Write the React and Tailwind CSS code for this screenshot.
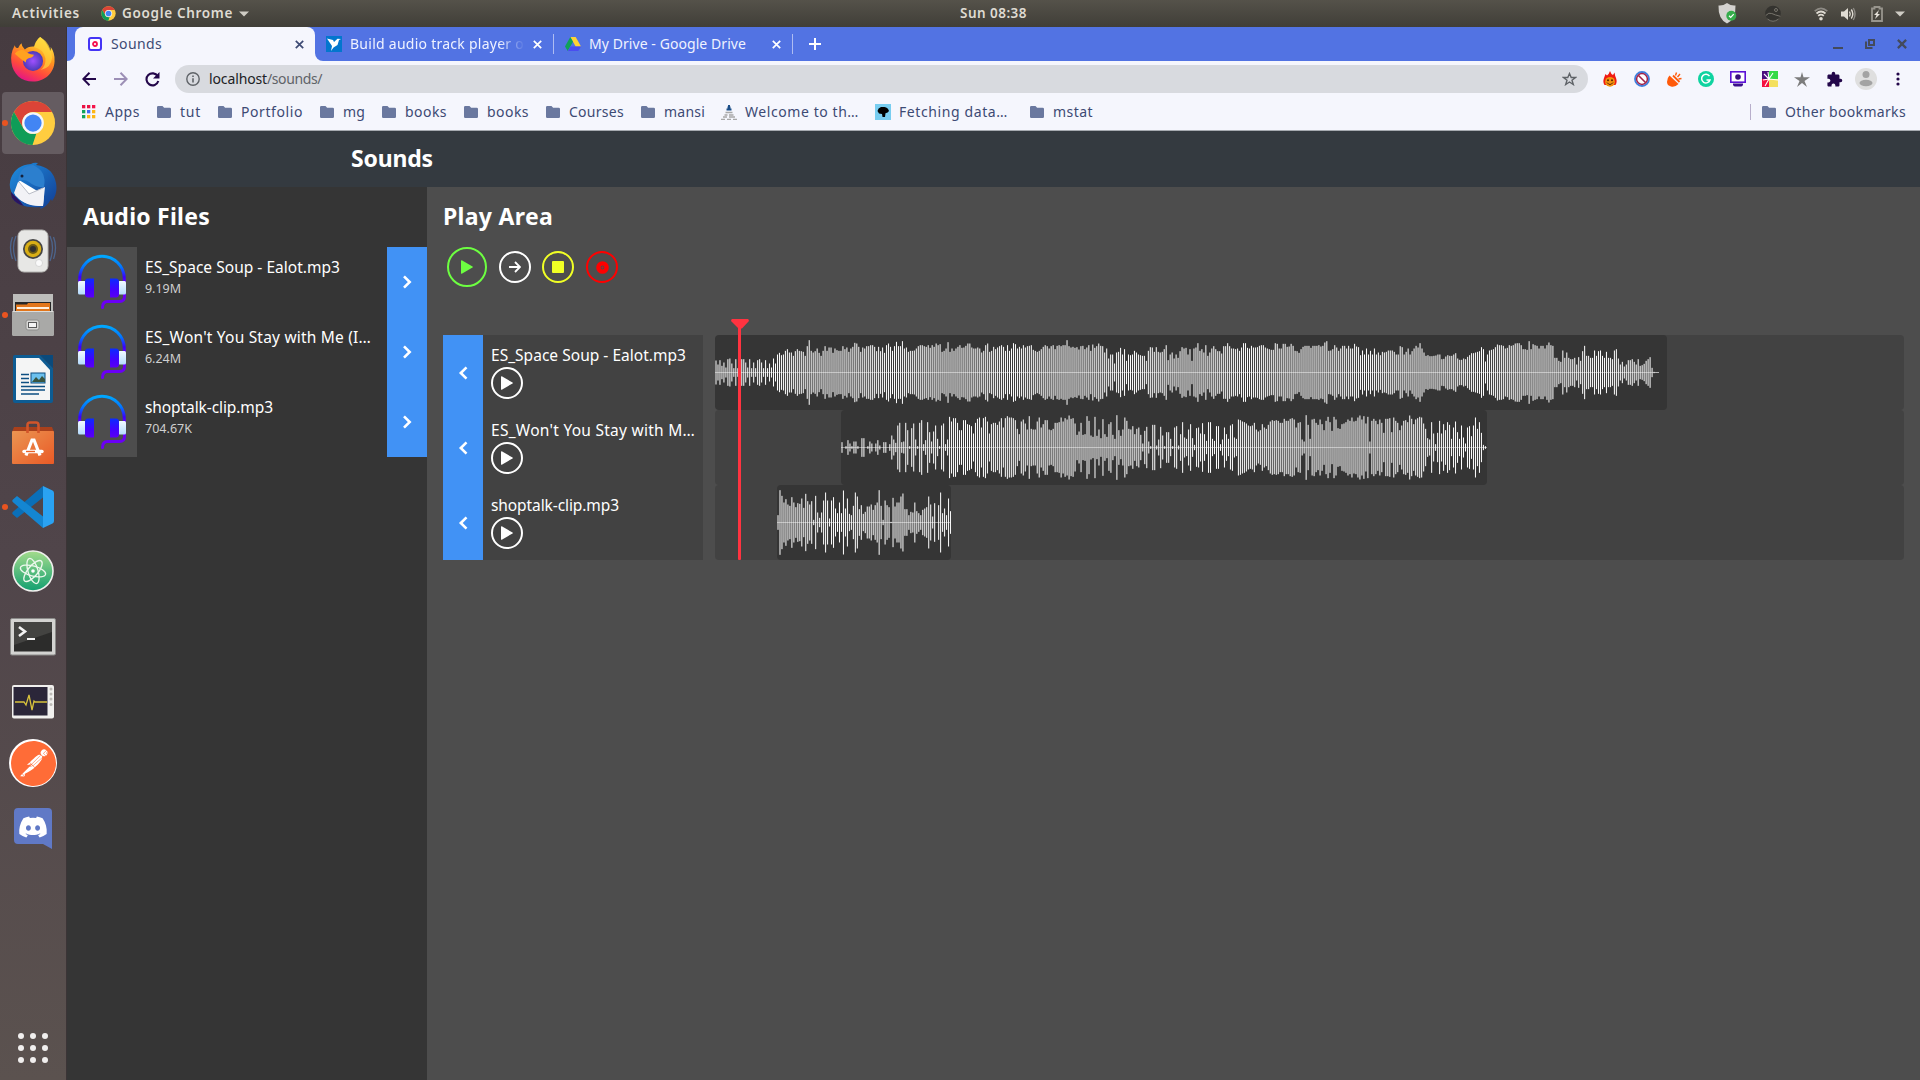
import React, { useLayoutEffect, useRef } from "react";
import { FaDiscord } from "react-icons/fa";
import { SiPostman } from "react-icons/si";
import { MdExtension } from "react-icons/md";

/* Text spread evenly over a given width. */
function Fit({ w, children, className = "" }) {
  const ref = useRef(null);
  useLayoutEffect(() => {
    const el = ref.current;
    el.style.letterSpacing = "0px";
    const natural = el.getBoundingClientRect().width;
    el.style.letterSpacing = `${(w - natural) / children.length}px`;
  }, [w, children]);
  return (
    <span ref={ref} className={`inline-block whitespace-pre ${className}`}>
      {children}
    </span>
  );
}

const WAVE_1 = [
  36,24,37,20,30,15,40,42,27,13,40,13,13,40,40,30,15,40,13,30,
  13,37,40,30,13,37,13,27,15,42,27,54,59,52,54,65,70,60,60,50,
  64,70,65,64,62,50,79,97,65,60,64,72,59,50,65,79,65,75,75,59,
  72,67,65,65,79,70,75,62,72,77,89,87,77,62,75,72,79,79,82,82,
  77,64,77,64,75,59,82,87,77,65,79,92,79,79,94,72,75,62,65,65,
  66,72,79,82,82,79,77,82,74,82,77,87,82,85,62,65,72,91,62,72,
  65,72,77,82,74,75,80,87,87,75,72,72,75,72,60,65,82,87,62,65,
  77,70,75,79,82,77,65,82,65,72,88,85,72,77,72,82,75,79,80,82,
  68,65,62,65,70,77,82,79,72,79,82,70,80,82,79,82,82,97,79,75,
  77,74,76,69,79,80,70,75,82,65,84,74,79,87,80,79,60,72,42,54,
  54,27,60,62,74,54,70,35,54,52,54,65,60,54,52,50,50,35,65,76,
  75,62,76,62,60,62,70,82,37,54,60,42,54,44,64,76,72,74,54,70,
  35,72,75,88,65,70,60,82,50,60,72,79,70,64,64,57,79,79,88,79,
  72,72,70,72,65,75,88,88,74,72,80,75,75,76,80,82,82,75,72,70,
  68,68,88,86,72,72,86,86,77,78,86,80,65,64,59,70,77,80,80,80,
  74,80,80,80,82,78,80,90,94,65,66,70,82,75,65,72,80,80,72,80,
  72,72,86,78,76,52,66,54,72,54,65,54,72,54,60,52,62,60,62,66,
  66,66,62,54,54,79,76,54,62,72,54,64,72,80,75,88,72,60,50,52,
  49,49,50,51,54,54,40,41,48,52,50,50,54,58,42,38,38,42,40,47,
  52,58,58,60,62,64,76,70,33,54,66,68,70,76,84,82,82,80,72,74,
  82,80,82,87,88,88,82,70,70,68,94,70,85,82,80,72,80,80,72,82,
  90,82,80,44,44,35,32,66,44,60,44,40,40,44,24,46,35,64,80,50,
  50,44,44,66,50,64,66,50,44,62,44,44,40,66,70,42,24,32,18,24,
  37,37,40,32,24,40,20,22,26,35,40,46,14,2,1,1,
];

const WAVE_2 = [
  16,0,4,22,12,4,18,18,4,0,28,28,0,4,18,12,0,12,22,6,
  0,16,16,0,10,36,24,14,66,74,16,18,74,52,4,58,72,24,4,74,
  82,10,22,76,46,18,48,66,26,4,66,72,10,24,92,78,88,88,74,52,
  52,82,82,70,68,64,42,74,86,90,60,88,92,78,42,70,74,74,68,78,
  88,60,88,94,90,90,88,82,56,40,78,84,72,54,94,56,54,54,78,90,
  60,70,82,82,54,52,56,74,74,76,90,78,88,84,96,86,88,72,
  38,48,74,38,40,94,80,36,32,92,35,54,28,85,40,32,70,76,38,26,
  97,52,35,54,90,80,56,54,64,40,56,60,38,12,50,62,18,4,68,68,
  6,24,62,36,4,46,46,26,4,60,64,6,40,76,30,26,54,70,28,8,58,60,
  42,73,40,20,76,76,26,20,64,64,10,24,60,40,26,66,70,30,26,84,
  82,78,76,72,66,64,66,74,54,48,52,70,60,56,68,78,82,80,82,80,
  74,74,86,80,80,86,88,84,60,74,76,24,18,97,68,26,84,86,74,68,
  84,70,52,80,92,76,50,92,84,58,56,70,72,76,84,80,90,78,80,90,
  96,84,94,72,92,18,80,86,80,70,84,74,44,86,86,88,46,90,80,74,
  52,66,80,82,76,96,86,70,84,88,92,90,72,56,28,24,76,42,10,44,
  80,42,70,52,76,68,26,60,78,46,26,66,30,12,60,64,34,66,90,56,76,44,8,4,1,
];

const WAVE_3 = [
  22,97,80,60,70,54,50,76,60,46,58,56,72,44,86,64,54,64,8,80,
  30,14,30,66,90,66,12,66,76,42,28,60,28,96,42,72,26,22,50,90,
  78,40,52,26,32,48,48,54,38,52,60,97,50,8,66,52,46,2,74,48,
  60,60,78,87,40,40,22,32,30,60,34,28,22,38,42,46,78,54,18,58,
  0,52,90,28,42,22,72,34,
];

function Wave({ data, width, phase, pitch }) {
  return (
    <svg width={width} height="75" className="block">
      <g fill="#ffffff">
        {data.map((a, i) => {
          const h = (a * 2) / 3;
          return h > 0 ? (
            <rect key={i} x={phase + i * pitch} y={37.5 - h / 2} width="1" height={h} />
          ) : null;
        })}
      </g>
      <rect x="0" y="37" width={data.length * pitch} height="1" fill="#fff" opacity="0.45" />
    </svg>
  );
}

function Headphones() {
  return (
    <svg width="54" height="60" viewBox="0 0 54 60">
      <defs>
        <linearGradient id="hp-band" x1="0" y1="0" x2="0" y2="1">
          <stop offset="0" stopColor="#00a8ff" />
          <stop offset="0.4" stopColor="#0074ff" />
          <stop offset="0.75" stopColor="#3a00ff" />
          <stop offset="1" stopColor="#7a00f5" />
        </linearGradient>
        <linearGradient id="hp-pad" x1="0" y1="0" x2="0" y2="1">
          <stop offset="0" stopColor="#0a2cff" />
          <stop offset="0.6" stopColor="#4400ff" />
          <stop offset="1" stopColor="#5a00f5" />
        </linearGradient>
        <linearGradient id="hp-cap" x1="0" y1="0" x2="0" y2="1">
          <stop offset="0" stopColor="#f2f9ff" />
          <stop offset="1" stopColor="#b5dcff" />
        </linearGradient>
      </defs>
      <path d="M4.700 31V25.500a22.300 22.300 0 0 1 44.600 0V31" fill="none" stroke="url(#hp-band)" strokeWidth="3" />
      <path d="M49.500 41v2.500q0 5-5 5H32.500q-5 0-5 6" fill="none" stroke="#6a00f6" strokeWidth="3" strokeLinecap="round" />
      <rect x="3" y="28" width="8" height="13.500" rx="1.500" fill="url(#hp-cap)" />
      <rect x="43" y="28" width="8" height="13.500" rx="1.500" fill="url(#hp-cap)" />
      <path d="M13 25.500h6v19h-6q-3-.4-3-3V28.500q0-2.700 3-3z" fill="url(#hp-pad)" />
      <path d="M41 25.500h-6v19h6q3-.4 3-3V28.500q0-2.700-3-3z" fill="url(#hp-pad)" />
    </svg>
  );
}

function Chevron({ left }) {
  return (
    <svg width="10" height="14" viewBox="0 0 10 14" fill="none" stroke="#fff" strokeWidth="2.600">
      <path d={left ? "M8.500 1.300 2.800 7 8.500 12.700" : "M2 1.300 7.700 7 2 12.700"} />
    </svg>
  );
}

const Folder = () => (
  <svg width="14" height="12" viewBox="0 0 14 12" fill="#6a789f" className="shrink-0">
    <path d="M1.300 0h4.200l1.600 1.800h5.600Q14 1.800 14 3v7.700q0 1.300-1.300 1.300H1.300Q0 12 0 10.700V1.300Q0 0 1.300 0z" />
  </svg>
);

const AppsGrid = () => (
  <svg width="14" height="14" viewBox="0 0 14 14" className="shrink-0">
    {["#ea1244", "#ea1244", "#f5134a", "#12a45b", "#4168f5", "#fdb614", "#12a45b", "#fdb614", "#fdb614"].map((c, i) => (
      <rect key={i} x={(i % 3) * 5} y={Math.floor(i / 3) * 5} width="3.300" height="3.300" fill={c} />
    ))}
  </svg>
);

const Lighthouse = () => (
  <svg width="16" height="16" viewBox="0 0 16 16" className="-mr-px shrink-0">
    <path d="M8 1v2M5.500 5.500h5M6.500 3.500h3" stroke="#1c4f88" strokeWidth="2" />
    <path d="M4.500 8.500h7M3.500 11h3M8 11h4.500M2 13h4M8 13h6M0 15.300h4M6 15.300h4M12 15.300h4" stroke="#a8a8a8" strokeWidth="1.300" />
  </svg>
);

const Silhouette = () => (
  <svg width="16" height="16" viewBox="0 0 16 16" className="-mr-px shrink-0">
    <rect width="16" height="16" fill="#78cdf0" />
    <path d="M2.500 7q.5-3 3.500-4h3.500q3.500.5 4.500 4-1 2-3.500 2.300L10 13H7.500L7 10l-3-.5z" fill="#000" />
  </svg>
);

const BOOKMARKS = [
  { t: "Apps", w: 35, mr: 17, icon: <AppsGrid /> },
  { t: "tut", w: 21, mr: 17 },
  { t: "Portfolio", w: 62, mr: 17 },
  { t: "mg", w: 22, mr: 17 },
  { t: "books", w: 42, mr: 17 },
  { t: "books", w: 42, mr: 17 },
  { t: "Courses", w: 55, mr: 17 },
  { t: "mansi", w: 41, mr: 16 },
  { t: "Welcome to th…", w: 114, mr: 16, icon: <Lighthouse /> },
  { t: "Fetching data…", w: 109, mr: 22, icon: <Silhouette /> },
  { t: "mstat", w: 40, mr: 0 },
];

function ChromeLogo({ size }) {
  return (
    <svg width={size} height={size} viewBox="0 0 48 48">
      <circle cx="24" cy="24" r="23" fill="#ffcd40" />
      <path d="M4.100 12.500A23 23 0 0 1 44 12.600H24a11.500 11.500 0 0 0-10.300 16.500z" fill="#db4437" />
      <path d="M4.100 12.500 14 29.700a11.500 11.500 0 0 0 13.500 5.200L23.500 47A23 23 0 0 1 4.100 12.500z" fill="#0f9d58" />
      <circle cx="24" cy="24" r="11.300" fill="#f4f6fb" />
      <circle cx="24" cy="24" r="9" fill="#4285f4" />
    </svg>
  );
}

const Firefox = () => (
  <svg width="46" height="47" viewBox="0 0 48 48">
    <defs>
      <linearGradient id="fx" x1="0.75" y1="0.05" x2="0.3" y2="1">
        <stop offset="0" stopColor="#fff04f" />
        <stop offset="0.35" stopColor="#ff9a1e" />
        <stop offset="0.7" stopColor="#ff4a3c" />
        <stop offset="1" stopColor="#e3128a" />
      </linearGradient>
      <radialGradient id="fxg">
        <stop offset="0" stopColor="#a050ff" />
        <stop offset="1" stopColor="#4a3ab8" />
      </radialGradient>
    </defs>
    <path d="M5 9q-5 9-3.500 18C3 39 12 47 24 47s22-9 22.500-21Q47 17 42.500 11q.5 3-.5 4.500Q38 5 31.500 0.500 27 4 25.500 10.500 19 10 15.500 13.500 12 10.500 12 7 9.500 9 8.500 12 5.500 12 5 9z" fill="url(#fx)" />
    <circle cx="24" cy="25.500" r="10.500" fill="url(#fxg)" />
    <path d="M5 18q4-5 10-3.500 3 3.500 10 4.500-1 3-5 3.500-3.500 1-3.500 4.500-5-3-11.500-9z" fill="#ffa21f" />
    <path d="M25 11q10 2 12 12 .5 8-5 12 11-2 12-13Q43 7 31.500.5 26 5 25 11z" fill="#ffd43a" opacity="0.7" />
  </svg>
);

const Thunderbird = () => (
  <svg width="50" height="50" viewBox="0 0 50 50">
    <defs>
      <linearGradient id="tb" x1="0" y1="0" x2="1" y2="1">
        <stop offset="0" stopColor="#1f8fe0" />
        <stop offset="1" stopColor="#123c93" />
      </linearGradient>
    </defs>
    <path d="M3 16Q8 3 23 2q3-2 7-1l-2 2Q45 5 48 21q2 10-4 18l-1-2q-4 8-11 10l1-2Q12 47 4 36l4 1Q-1 27 3 16z" fill="url(#tb)" />
    <path d="M11 18 36 33l-1 11Q18 45 7 33z" fill="#fff" />
    <path d="m10 20 11 12 16-7-2 19Q15 45 6 31z" fill="#f2f2f6" />
    <path d="m11 20 10 12 14-6" fill="none" stroke="#b9bcc6" />
    <path d="M10 20Q11 4 25 3q14 6 11 22-8 1-15-5-6-4-11 0z" fill="#2c7fce" />
    <circle cx="14" cy="14" r="1.500" fill="#14213d" />
    <path d="M4 36q-1-3-1-6l9 9q2 3 4 5-8-2-12-8z" fill="#2a1560" />
  </svg>
);

const Speaker = () => (
  <svg width="50" height="48" viewBox="0 0 50 48">
    <g fill="none" stroke="#4e6e9e" strokeWidth="1.300" opacity="0.8">
      <path d="M8 9Q3 20 8 34M4.500 10q-4 10 0 22M42 9q5 11 0 25M45.500 10q4 10 0 22" />
    </g>
    <rect x="10" y="3" width="30" height="42" rx="6" fill="#e7e7e5" stroke="#b5b5b2" />
    <circle cx="25" cy="22" r="10" fill="#454545" />
    <circle cx="25" cy="22" r="8.300" fill="#d8ae16" />
    <circle cx="25" cy="22" r="5" fill="#6b5a16" />
    <circle cx="25" cy="22" r="3" fill="#2f2f2f" />
    <circle cx="31" cy="36" r="3.500" fill="#fafafa" stroke="#c4c4c4" strokeWidth="0.600" />
  </svg>
);

const FilesCabinet = () => (
  <svg width="44" height="44" viewBox="0 0 44 44">
    <path d="M2 1h40v19H2z" fill="#bdbdbb" />
    <rect x="4" y="9" width="36" height="11" fill="#262626" />
    <path d="M5 11.500h11l1-1.500h22v8H5z" fill="#e2761b" />
    <path d="M6 14h32v2H6z" fill="#fff0df" />
    <rect x="1" y="18" width="42" height="25" rx="1.500" fill="#a9a9a7" />
    <path d="M1.500 18.500h41" stroke="#dcdcda" />
    <rect x="15" y="27" width="13" height="10" rx="2" fill="#d8d8d6" stroke="#8e8e8c" />
    <rect x="17.500" y="29.500" width="8" height="5" fill="#f5f5f5" stroke="#595959" />
  </svg>
);

const Writer = () => (
  <svg width="40" height="48" viewBox="0 0 40 48">
    <path d="M2 0h25l13 13v33q0 2-2 2H2q-2 0-2-2V2Q0 0 2 0z" fill="#0d5c93" />
    <path d="M27 0h13v13z" fill="#0a4a7c" />
    <path d="M3 3h23l11 12v30H3z" fill="#f4f5f5" />
    <path d="M8 19.500h8M8 23.500h8M8 27.500h8M8 31.500h24M8 35h24M8 39h18" stroke="#0d4f82" strokeWidth="1.700" />
    <rect x="18" y="18" width="14" height="10" fill="#6cc1ee" stroke="#0d4f82" />
    <path d="m19 27 4-5 3 3 3-4 3 3v3z" fill="#39543f" />
  </svg>
);

const SoftwareBag = () => (
  <svg width="42" height="44" viewBox="0 0 42 44">
    <defs>
      <linearGradient id="bag" x1="0" y1="0" x2="1" y2="1">
        <stop offset="0" stopColor="#ea9552" />
        <stop offset="1" stopColor="#ea5a26" />
      </linearGradient>
    </defs>
    <path d="M2 6h38l2 5H0z" fill="#a8401c" />
    <rect y="10" width="42" height="33" rx="1" fill="url(#bag)" />
    <path d="M15.500 12V4q0-2.500 2.500-2.500h6q2.500 0 2.500 2.500v8" fill="none" stroke="#d3552a" strokeWidth="2.600" />
    <path d="M14 34.500 20 19h2l6 15.500" fill="none" stroke="#fff" strokeWidth="3.200" />
    <path d="M12 30.500h18" stroke="#fff" strokeWidth="3.400" strokeLinecap="round" />
    <path d="M14 30.500h9" stroke="#e8622a" strokeWidth="1.400" />
  </svg>
);

const VsCode = () => (
  <svg width="42" height="42" viewBox="0 0 42 42">
    <path d="M31 0v11.500L5 32l-4-3.500q-1.500-1.300 0-2.700z" fill="#0a6fb8" />
    <path d="M31 42V30.500L5 10l-4 3.500q-1.500 1.300 0 2.700z" fill="#1486d2" />
    <path d="M31 0l9.500 4.500Q42 5.200 42 7v28q0 1.800-1.500 2.500L31 42z" fill="#2aa2f2" />
  </svg>
);

const Atom = () => (
  <svg width="42" height="42" viewBox="0 0 42 42">
    <defs>
      <linearGradient id="atom" x1="0" y1="0" x2="0" y2="1">
        <stop offset="0" stopColor="#a4dc8c" />
        <stop offset="1" stopColor="#12a070" />
      </linearGradient>
    </defs>
    <circle cx="21" cy="21" r="20" fill="url(#atom)" stroke="#f0f0ee" strokeWidth="1.600" />
    <g fill="none" stroke="#eef8ee" strokeWidth="1.300">
      <ellipse cx="21" cy="21" rx="13" ry="5" transform="rotate(15 21 21)" />
      <ellipse cx="21" cy="21" rx="13" ry="5" transform="rotate(73 21 21)" />
      <ellipse cx="21" cy="21" rx="13" ry="5" transform="rotate(130 21 21)" />
    </g>
    <circle cx="21" cy="21" r="1.800" fill="#fff" />
  </svg>
);

const Terminal = () => (
  <svg width="46" height="40" viewBox="0 0 46 40" className="mt-[3px]">
    <rect x="0.500" y="1.500" width="45" height="36.500" rx="1.500" fill="#d3d3d1" stroke="#8b8b89" />
    <rect x="4" y="5" width="38" height="29.500" fill="#2c2c2b" />
    <path d="M4 5h38v10L4 28z" fill="#434341" />
    <path d="m9 10 6 4.500-6 4.500" fill="none" stroke="#f3f3f3" strokeWidth="2.600" />
    <path d="M17 22h8" stroke="#f3f3f3" strokeWidth="2" />
  </svg>
);

const Monitor = () => (
  <svg width="42" height="34" viewBox="0 0 42 34" className="mt-[5px]">
    <rect width="42" height="33.500" rx="2" fill="#f1f0ee" />
    <rect x="1.500" y="2" width="34" height="28.500" fill="#2b2639" />
    <path d="M3 17h9l2 3 3-10 3 15 2-9 1 1h12" fill="none" stroke="#d8c23c" strokeWidth="1.300" />
    {[4, 9, 14, 19.500].map((y) => (
      <circle key={y} cx="39" cy={y} r="1.500" fill="#bcbab6" />
    ))}
  </svg>
);

const Postman = () => (
  <div className="flex size-12 items-center justify-center rounded-full bg-white">
    <SiPostman size={45} color="#ff6c37" />
  </div>
);

const Discord = () => (
  <div className="relative mt-[3px] flex h-[42px] w-[38px] justify-center">
    <svg width="38" height="42" viewBox="0 0 38 42" className="absolute inset-0">
      <path d="M4 0h30q4 0 4 4v37l-9-5H4q-4 0-4-4V4q0-4 4-4z" fill="#6079c6" />
    </svg>
    <FaDiscord size={30} color="#fff" className="relative mt-1" />
  </div>
);

const DOCK = [
  { icon: <Firefox /> },
  { icon: <ChromeLogo size={46} />, active: true, dot: true },
  { icon: <Thunderbird /> },
  { icon: <Speaker /> },
  { icon: <FilesCabinet />, dot: true },
  { icon: <Writer /> },
  { icon: <SoftwareBag /> },
  { icon: <VsCode />, dot: true },
  { icon: <Atom /> },
  { icon: <Terminal /> },
  { icon: <Monitor /> },
  { icon: <Postman /> },
  { icon: <Discord /> },
];

function Dock() {
  return (
    <nav className="flex w-[67px] shrink-0 flex-col border-r border-[#3b3436] bg-linear-to-b from-[#463b40] via-[#50454a] to-[#5b524f]">
      {DOCK.map((d, i) => (
        <div key={i} className="flex h-16 items-center pl-[2px]">
          <div
            className={`relative flex h-[62px] w-[62px] items-center justify-center rounded ${d.active ? "bg-[#655c61]" : ""}`}
          >
            {d.icon}
            {d.dot && <span className="absolute top-[28px] left-0 size-[6px] rounded-full bg-[#e95420]" />}
          </div>
        </div>
      ))}
      <div className="mt-auto mb-[17px] grid w-[30px] grid-cols-3 gap-[6px] self-center">
        {Array.from({ length: 9 }, (_, i) => (
          <span key={i} className="size-[6px] rounded-full bg-[#f1efee]" />
        ))}
      </div>
    </nav>
  );
}

function TopBar() {
  return (
    <header className="flex h-[27px] shrink-0 items-center bg-linear-to-b from-[#55524a] to-[#403e38] text-[13.500px] font-semibold text-[#dfdbd2]">
      <div className="flex w-[960px] items-center pl-3">
        <Fit w={68}>Activities</Fit>
        <div className="ml-[21px] flex items-center">
          <ChromeLogo size={15} />
          <Fit w={111} className="ml-[6px]">Google Chrome</Fit>
          <Caret className="ml-[6px]" />
        </div>
      </div>
      <Fit w={67}>Sun 08:38</Fit>
      <div className="flex flex-1 items-center justify-end pr-[15px]">
        <svg width="19" height="21" viewBox="0 0 19 21" className="mr-[28px]">
          <path d="M9 0q4 3 8.500 2.500Q18 16 9 20.500 0 16 .5 2.500 5 3 9 0z" fill="#d4d2cf" />
          <circle cx="13.300" cy="12.700" r="5" fill="#35ac4b" />
          <path d="m11 12.800 1.700 1.600 3-3.200" fill="none" stroke="#fff" strokeWidth="1.200" />
        </svg>
        <svg width="16" height="17" viewBox="0 0 16 17" className="mr-[33px]">
          <circle cx="8" cy="8.500" r="7.800" fill="#34332f" />
          <path d="M.8 10.500q3-3.500 6-2t8.500 2.800M2.500 14q5.500 4.500 11 0" fill="none" stroke="#77746c" />
          <circle cx="11" cy="5" r="1.500" fill="none" stroke="#77746c" />
        </svg>
        <svg width="14" height="14" viewBox="0 0 14 14" fill="none" strokeWidth="1.700" className="mr-[13px]">
          <path d="M.7 4.200q6.300-5.500 12.600 0" stroke="#8d8a84" />
          <path d="M2.500 6.500q4.500-4 9 0M4.200 8.800q2.800-2.400 5.600 0" stroke="#dfdbd2" />
          <circle cx="7" cy="11.800" r="1.800" fill="#dfdbd2" />
        </svg>
        <svg width="15" height="14" viewBox="0 0 15 14" className="mr-[15px]">
          <path d="M0 4.500h3L7 1v12L3 9.500H0z" fill="#dfdbd2" />
          <path d="M8.500 4.500q1.500 2.500 0 5M10.300 2.500q3 4.500 0 9" fill="none" stroke="#dfdbd2" strokeWidth="1.400" />
          <path d="M12.300 1q3.500 6 0 12" fill="none" stroke="#8d8a84" strokeWidth="1.400" />
        </svg>
        <svg width="12" height="16" viewBox="0 0 12 16" className="mr-[12px]">
          <path d="M1 2.500h2.500V1h5v1.500H11V15H1z" fill="none" stroke="#98958d" strokeWidth="1.800" />
          <path d="M8 4 3 9h2.500L4 13l5-5H6.500z" fill="#e6e2da" />
        </svg>
        <Caret />
      </div>
    </header>
  );
}

const Caret = ({ className = "" }) => (
  <svg width="10" height="6" viewBox="0 0 10 6" className={className}>
    <path d="M0 0.500h10L5 5.500z" fill="#cfccc4" />
  </svg>
);

const Close = ({ color = "#fff", size = 9, sw = 1.7 }) => (
  <svg width={size} height={size} viewBox="0 0 9 9" stroke={color} strokeWidth={sw} className="shrink-0">
    <path d="M.8.8l7.400 7.400M8.200.8.8 8.200" />
  </svg>
);

function TabStrip() {
  return (
    <div className="flex h-[34px] items-center bg-[#5273e3] text-[14px] text-[#eff2ff]">
      <div className="flex h-full w-2 shrink-0 items-end bg-[#f5f6fd]">
        <span className="h-full w-full rounded-br-lg bg-[#5273e3]" />
      </div>
      <div className="flex h-full w-[240px] shrink-0 items-center rounded-t-lg bg-[#f5f6fd] pl-[13px] text-[#3d4a74]">
        <svg width="14" height="14" viewBox="0 0 14 14">
          <rect x="1" y="1" width="12" height="12" rx="2" fill="#fff" stroke="#4434f5" strokeWidth="2" />
          <circle cx="7" cy="7" r="2" fill="none" stroke="#f5124f" strokeWidth="1.800" />
        </svg>
        <Fit w={51} className="ml-[9px] pb-[2px]">Sounds</Fit>
        <span className="mr-[11px] ml-auto flex">
          <Close color="#3d4a74" />
        </span>
      </div>
      <div className="flex h-full flex-1 items-center">
        <div className="flex h-full w-2 shrink-0 bg-[#f5f6fd]">
          <span className="h-full w-full rounded-bl-lg bg-[#5273e3]" />
        </div>
        <svg width="16" height="16" viewBox="0 0 16 16" className="ml-[3px]">
          <rect width="16" height="16" fill="#0376ce" />
          <path d="M1 2.500 7 4l1 2 3.500-3.300L15 3l-2 1-1.500 5-4 2.500L5 15l1-5z" fill="#fff" />
        </svg>
        <div className="ml-[8px] flex w-[175px] overflow-hidden mask-r-from-85% mask-r-to-100%">
          <Fit w={174} className="pb-[2px]">Build audio track player o</Fit>
        </div>
        <span className="ml-[8px] flex">
          <Close />
        </span>
        <span className="ml-[11px] h-5 w-px bg-[#aebcf2]" />
        <svg width="16" height="15" viewBox="0 0 16 15" className="ml-[11px]">
          <path d="M5.300 0h5.400L16 9.500h-5.300z" fill="#ffd335" />
          <path d="M5.300 0 8 4.800 2.700 14 0 9.500z" fill="#10a15a" />
          <path d="M5.300 9.500H16L13.300 14H2.700z" fill="#4a4df0" />
        </svg>
        <Fit w={157} className="ml-[8px] pb-[2px]">My Drive - Google Drive</Fit>
        <span className="ml-[26px] flex">
          <Close />
        </span>
        <span className="ml-[11px] h-5 w-px bg-[#aebcf2]" />
        <svg width="12" height="12" viewBox="0 0 12 12" stroke="#fff" strokeWidth="2" className="ml-[16px]">
          <path d="M6 0v12M0 6h12" />
        </svg>
        <div className="mr-[13px] ml-auto flex items-center gap-[22px]">
          <svg width="10" height="10" viewBox="0 0 10 10">
            <rect y="8" width="10" height="2" fill="#434a5c" />
          </svg>
          <svg width="10" height="10" viewBox="0 0 10 10" fill="none" stroke="#434a5c" strokeWidth="2">
            <path d="M4 1h5v5H4z" />
            <path d="M1 2.500V9h6.500" />
          </svg>
          <Close color="#434a5c" size={10} sw={2} />
        </div>
      </div>
    </div>
  );
}

function Extensions() {
  const cell = "flex w-8 shrink-0 justify-center";
  return (
    <div className="flex items-center">
      <div className={cell}>
        <svg width="14" height="16" viewBox="0 0 14 16">
          <path d="M7 0q1 3 3 4l1.500-2.500Q12 5 13 7q1.500 4-.5 7h-11Q-.5 11 1 7l1.500-4L4 4.500Q6 3 7 0z" fill="#f01a12" />
          <circle cx="7" cy="10.800" r="4.900" fill="#f3930f" />
          <path d="M4 11.500q3 4 6 0" fill="none" stroke="#5c2204" />
          <circle cx="5" cy="9.200" r="1" fill="#5c2204" />
          <circle cx="9" cy="9.200" r="1" fill="#5c2204" />
        </svg>
      </div>
      <div className={cell}>
        <svg width="16" height="16" viewBox="0 0 16 16" fill="none">
          <circle cx="8" cy="8" r="7" fill="#fff" stroke="#3f7fdd" strokeWidth="1.800" />
          <circle cx="8" cy="8" r="5.400" stroke="#a1234a" strokeWidth="1.500" />
          <path d="m4.500 4.500 7 7" stroke="#a1234a" strokeWidth="1.600" />
        </svg>
      </div>
      <div className={cell}>
        <svg width="15" height="15" viewBox="0 0 15 15">
          <path d="M2.500 3.500 11.500 12Q8 15.500 4 14.500T0 10q0-4 2.500-6.500z" fill="#ff5a0a" />
          <path d="m6 3.500 6.500 6.500" stroke="#ff5a0a" strokeWidth="1.800" />
          <path d="M8.500 3.500 9.500.5M10.500 5 13 2M11.500 7l3-.5" stroke="#ff5a0a" strokeWidth="1.400" />
        </svg>
      </div>
      <div className={cell}>
        <svg width="16" height="16" viewBox="0 0 16 16">
          <circle cx="8" cy="8" r="8" fill="#0fd3a0" />
          <path d="M11.500 5.200A4.300 4.300 0 1 0 12 9H8.500" fill="none" stroke="#fff" strokeWidth="1.500" />
        </svg>
      </div>
      <div className={cell}>
        <svg width="16" height="16" viewBox="0 0 16 16">
          <rect x="0.800" y="0.800" width="14.400" height="10.400" fill="#fff" stroke="#5c12d6" strokeWidth="1.600" />
          <circle cx="8" cy="6" r="2.800" fill="#3a1080" />
          <path d="M3 12.500h10v1.500q-1 1.500-2 1.500H5q-1 0-2-1.500z" fill="#3a0e8c" />
        </svg>
      </div>
      <div className={cell}>
        <svg width="16" height="16" viewBox="0 0 16 16">
          <rect width="7" height="8" fill="#4b0d7e" />
          <rect x="7" width="9" height="8" fill="#35da45" />
          <rect y="8" width="7" height="8" fill="#f5113f" />
          <rect x="7" y="8" width="9" height="8" fill="#f4e05e" />
          <path d="M7 8 2 3M7 8 6 1M7 8l4-6M7 8 1 9M7 8l-4 7M7 8l9 1" stroke="#fff" strokeWidth="1.100" />
        </svg>
      </div>
      <div className={cell}>
        <svg width="16" height="15" viewBox="0 0 16 15">
          <path d="m8 0 1.500 5.300H16L10.500 9l2.500 6-5-4-5 4 2.500-6L0 5.300h6.500z" fill="#7c7c7c" />
        </svg>
      </div>
      <div className={cell}>
        <MdExtension size={17} color="#23074a" />
      </div>
      <div className={cell}>
        <svg width="22" height="22" viewBox="0 0 22 22">
          <circle cx="11" cy="11" r="11" fill="#dfdfdf" />
          <circle cx="11" cy="6.500" r="3.500" fill="#a3a3a3" />
          <ellipse cx="11" cy="15" rx="6.500" ry="3.300" fill="#a3a3a3" />
        </svg>
      </div>
      <div className={cell}>
        <svg width="4" height="14" viewBox="0 0 4 14" fill="#23074a">
          <circle cx="2" cy="2" r="1.600" />
          <circle cx="2" cy="7" r="1.600" />
          <circle cx="2" cy="12" r="1.600" />
        </svg>
      </div>
    </div>
  );
}

function Toolbar() {
  return (
    <div className="flex h-[36px] items-center bg-[#f5f6fd] pr-[6px]">
      <svg width="14" height="14" viewBox="0 0 14 14" fill="none" stroke="#23074a" strokeWidth="2" className="ml-[15px]">
        <path d="M14 7H1.500M7.500.8 1.300 7l6.200 6.200" />
      </svg>
      <svg width="14" height="14" viewBox="0 0 14 14" fill="none" stroke="#9c8fb6" strokeWidth="2" className="ml-[18px]">
        <path d="M0 7h12.500M6.500.8 12.700 7l-6.200 6.200" />
      </svg>
      <svg width="15" height="15" viewBox="0 0 15 15" fill="none" className="ml-[17px]">
        <path d="M12.700 4.300A6 6 0 1 0 13.300 9" stroke="#23074a" strokeWidth="2.100" />
        <path d="M14.500 0v6.500H8z" fill="#23074a" />
      </svg>
      <div className="ml-[15px] flex h-7 flex-1 items-center rounded-full bg-[#d8dadf] pr-[11px] pl-[11px] text-[14px]">
        <svg width="14" height="14" viewBox="0 0 14 14" fill="none" stroke="#5f6368" strokeWidth="1.400">
          <circle cx="7" cy="7" r="6.200" />
          <path d="M7 6.200v4.300M7 3.500V5" strokeWidth="1.600" />
        </svg>
        <Fit w={58} className="ml-[9px] pb-[2px] text-[#202124]">localhost</Fit>
        <Fit w={55} className="pb-[2px] text-[#5f6368]">/sounds/</Fit>
        <svg width="15" height="14" viewBox="0 0 15 14" fill="none" stroke="#5f6368" strokeWidth="1.400" className="ml-auto">
          <path d="m7.500 1.500 1.700 4h4.300L10 8.300l1.300 4.200-3.800-2.500-3.800 2.500L5 8.300 1.500 5.500h4.300z" />
        </svg>
      </div>
      <div className="ml-[6px]">
        <Extensions />
      </div>
    </div>
  );
}

function Bookmarks() {
  return (
    <div className="flex h-[34px] items-center border-b border-[#a6aab0] bg-[#f5f6fd] pb-[3px] pl-[15px] text-[14px] text-[#3d4a74]">
      {BOOKMARKS.map((b, i) => (
        <div key={i} className="flex items-center gap-[9px]" style={{ marginRight: b.mr }}>
          {b.icon || <Folder />}
          <Fit w={b.w} className="pb-[2px]">{b.t}</Fit>
        </div>
      ))}
      <div className="mr-[14px] ml-auto flex items-center">
        <span className="mr-[11px] h-4 w-px bg-[#b8aecb]" />
        <Folder />
        <Fit w={121} className="ml-[9px] pb-[2px]">Other bookmarks</Fit>
      </div>
    </div>
  );
}

const FILES = [
  { name: "ES_Space Soup - Ealot.mp3", w: 195, size: "9.19M", sw: 36 },
  { name: "ES_Won't You Stay with Me (I…", w: 226, size: "6.24M", sw: 36 },
  { name: "shoptalk-clip.mp3", w: 128, size: "704.67K", sw: 47 },
];

function Sidebar() {
  return (
    <aside className="flex w-[360px] shrink-0 flex-col bg-[#353535] text-white">
      <h2 className="flex h-[60px] items-center pb-[2px] pl-4 text-[23px] font-bold">
        <Fit w={127}>Audio Files</Fit>
      </h2>
      {FILES.map((f) => (
        <div key={f.name} className="flex h-[70px]">
          <div className="flex w-[70px] items-start justify-center bg-[#4d4d4d] pt-[6px]">
            <Headphones />
          </div>
          <div className="flex flex-1 flex-col pt-[8px] pl-2">
            <div className="h-6 text-[15.500px] leading-[25px]">
              <Fit w={f.w}>{f.name}</Fit>
            </div>
            <div className="h-[19px] text-[12.500px] leading-[19px] text-[#cfcfcf]">
              <Fit w={f.sw}>{f.size}</Fit>
            </div>
          </div>
          <button className="flex w-10 items-center justify-center bg-[#4192f5]">
            <Chevron />
          </button>
        </div>
      ))}
    </aside>
  );
}

const PlayGlyph = ({ color }) => (
  <svg width="12" height="14" viewBox="0 0 12 14" fill={color}>
    <path d="M0 .7Q0 0 .8.300L11.500 6.500q.8.500 0 1L.8 13.700Q0 14 0 13.300z" />
  </svg>
);

function Controls() {
  return (
    <div className="flex h-10 items-center pl-1">
      <button className="flex size-10 items-center justify-center rounded-full border-2 border-[#6dff41]">
        <PlayGlyph color="#6dff41" />
      </button>
      <button className="ml-3 flex size-8 items-center justify-center rounded-full border-2 border-white">
        <svg width="12" height="12" viewBox="0 0 12 12" fill="none" stroke="#fff" strokeWidth="1.800">
          <path d="M0 6h10.500M6 1l5 5-5 5" />
        </svg>
      </button>
      <button className="ml-[11px] flex size-8 items-center justify-center rounded-full border-2 border-[#f1ff25]">
        <span className="size-[12px] rounded-[1px] bg-[#f1ff25]" />
      </button>
      <button className="ml-3 flex size-8 items-center justify-center rounded-full border-2 border-[#ff0000]">
        <svg width="13" height="13" viewBox="0 0 13 13">
          <circle cx="6.500" cy="6.500" r="4.100" fill="none" stroke="#ff0000" strokeWidth="4.400" />
          <circle cx="6.500" cy="6.500" r="0.900" fill="#ff0000" />
        </svg>
      </button>
    </div>
  );
}

const TRACKS = [
  { name: "ES_Space Soup - Ealot.mp3", w: 195, start: 0, len: 952, wave: WAVE_1 },
  { name: "ES_Won't You Stay with M…", w: 204, start: 126, len: 646, wave: WAVE_2 },
  { name: "shoptalk-clip.mp3", w: 128, start: 62, len: 174, wave: WAVE_3 },
];

function PlayArea() {
  return (
    <main className="flex flex-1 flex-col bg-[#4d4d4d] pr-4 pl-4 text-white">
      <h2 className="flex h-[60px] items-center pb-[2px] text-[23px] font-bold">
        <Fit w={110}>Play Area</Fit>
      </h2>
      <Controls />
      <div className="mt-12 flex">
        <div className="w-[260px] shrink-0">
          {TRACKS.map((t) => (
            <div key={t.name} className="flex h-[75px] bg-[#424242]">
              <button className="flex w-10 items-center justify-center bg-[#4192f5]">
                <Chevron left />
              </button>
              <div className="pt-[8px] pl-2">
                <div className="h-6 text-[15.500px] leading-6">
                  <Fit w={t.w}>{t.name}</Fit>
                </div>
                <button className="flex size-8 items-center justify-center rounded-full border-2 border-white">
                  <PlayGlyph color="#fff" />
                </button>
              </div>
            </div>
          ))}
        </div>
        <div className="relative ml-3 flex-1">
          {TRACKS.map((t) => (
            <div key={t.name} className="h-[75px] overflow-hidden rounded bg-[#424242]">
              <div
                className="h-full overflow-hidden rounded bg-[#353535]"
                style={{ marginLeft: t.start, width: t.len }}
              >
                <Wave data={t.wave} width={t.len} phase={0.5} pitch={t.wave === WAVE_2 ? 1.992 : 1.9832} />
              </div>
            </div>
          ))}
          <svg width="18" height="241" viewBox="0 0 18 241" className="absolute -top-4 left-4" fill="#ff3340">
            <path d="M1 0h16q1.500 1 .5 2.500L11 9.500H7.500L.5 2.500Q-.5 1 1 0z" />
            <rect x="7" y="5" width="3" height="236" rx="1" />
          </svg>
        </div>
      </div>
    </main>
  );
}

export default function App() {
  return (
    <div className="flex h-[1080px] w-[1920px] flex-col overflow-hidden bg-[#4d4d4d] font-['Noto_Sans','Open_Sans',sans-serif]">
      <TopBar />
      <div className="flex flex-1">
        <Dock />
        <div className="flex min-w-0 flex-1 flex-col">
          <TabStrip />
          <Toolbar />
          <Bookmarks />
          <div className="flex h-[56px] shrink-0 items-center bg-[#343a40] pb-[2px] pl-[284px] text-[23px] font-bold text-white">
            <Fit w={82}>Sounds</Fit>
          </div>
          <div className="flex flex-1">
            <Sidebar />
            <PlayArea />
          </div>
        </div>
      </div>
    </div>
  );
}
